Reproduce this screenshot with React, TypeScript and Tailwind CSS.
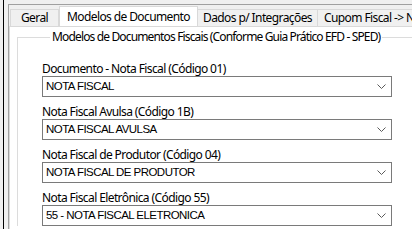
import React from "react";

const Chevron = () => (
  <svg width="9" height="5" viewBox="0 0 9 5" className="shrink-0">
    <path d="M0.5 0.5 L4.5 4.5 L8.5 0.5" fill="none" stroke="#5a5a5a" strokeWidth="1" />
  </svg>
);

const Field = ({ label, value }: { label: string; value: string }) => (
  <div className="flex flex-col">
    <div className="h-[15px] leading-[15px] text-[12px] tracking-[-0.6px] text-black whitespace-nowrap">{label}</div>
    <div className="w-[350px] h-[21px] border border-[#7a7a7a] bg-white flex items-center pl-[3px] pr-[5px]">
      <span className="flex-1 font-['Liberation_Sans',Arial,sans-serif] text-[11.5px] tracking-[-0.55px] text-black whitespace-nowrap leading-none">
        {value}
      </span>
      <Chevron />
    </div>
  </div>
);

export default function App() {
  return (
    <div className="w-[412px] h-[229px] overflow-hidden bg-[#f0f0f0] flex flex-row font-['Noto_Sans',sans-serif] text-black">
      <div className="w-[3px] shrink-0" />
      <div className="w-px shrink-0 bg-[#000]" />
      <div className="w-[4px] shrink-0" />
      <div className="flex-1 flex flex-col pt-[4px] min-w-0">
        <div className="flex-1 flex flex-col border-l border-t border-[#a0a0a0] min-w-0">
          {/* tabs */}
          <div className="h-[21px] flex flex-row items-end pl-[1px] shrink-0 overflow-hidden">
            <div className="h-[17px] w-[49px] shrink-0 border border-b-0 border-[#d9d9d9] bg-[#f0f0f0] flex items-center justify-center text-[12px] tracking-[-0.6px] leading-none whitespace-nowrap">
              Geral
            </div>
            <div className="h-[21px] w-[139px] shrink-0 border border-b-0 border-[#d9d9d9] bg-white flex items-start pt-[3px] justify-center text-[12px] tracking-[-0.6px] leading-[14px] whitespace-nowrap relative z-10 -mb-px">
              Modelos de Documento
            </div>
            <div className="h-[17px] w-[120px] shrink-0 border border-b-0 border-l-0 border-[#d9d9d9] bg-[#f0f0f0] flex items-center justify-center text-[12px] tracking-[-0.6px] leading-none whitespace-nowrap">
              Dados p/ Integrações
            </div>
            <div className="h-[17px] w-[140px] shrink-0 border border-b-0 border-l-0 border-[#d9d9d9] bg-[#f0f0f0] flex items-center pl-[6px] text-[12px] tracking-[-0.6px] leading-none whitespace-nowrap">
              Cupom Fiscal -&gt; NFC-e
            </div>
          </div>
          {/* panel */}
          <div className="flex-1 bg-white border-l border-t border-[#d9d9d9] pl-[7px] pt-[2px] min-w-0">
            <fieldset className="border border-r-0 border-b-0 border-[#dcdcdc] pl-[24px] pt-[16px] min-w-0 m-0">
              <legend className="ml-[8px] px-[2px] text-[12px] tracking-[-0.85px] leading-[16px] whitespace-nowrap">
                Modelos de Documentos Fiscais (Conforme Guia Prático EFD - SPED)
              </legend>
              <div className="flex flex-col gap-[7px]">
                <Field label="Documento - Nota Fiscal (Código 01)" value="NOTA FISCAL" />
                <Field label="Nota Fiscal Avulsa (Código 1B)" value="NOTA FISCAL AVULSA" />
                <Field label="Nota Fiscal de Produtor (Código 04)" value="NOTA FISCAL DE PRODUTOR" />
                <Field label="Nota Fiscal Eletrônica (Código 55)" value="55 - NOTA FISCAL ELETRONICA" />
              </div>
            </fieldset>
          </div>
        </div>
      </div>
    </div>
  );
}
